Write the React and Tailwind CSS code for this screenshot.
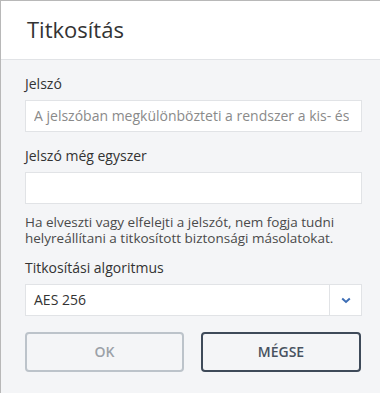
import React from "react";

export default function App() {
  return (
    <div
      className="w-[380px] h-[393px] overflow-hidden border-l border-t border-[#b8b8b8] bg-[#f4f5f7] flex flex-col"
      style={{ fontFamily: "'Open Sans', 'Liberation Sans', sans-serif" }}
    >
      <div className="h-[59px] shrink-0 bg-white border-b border-[#e1e3e6] flex items-center pl-[26px]">
        <h1 className="text-[22px] leading-none text-[#333] pb-[2px]">Titkosítás</h1>
      </div>
      <div className="pl-6 pt-[14px] w-[361px] flex flex-col">
        <label className="text-sm leading-5 text-[#333]">Jelszó</label>
        <div className="mt-1.5 h-8 bg-white border border-[#e1e3e6] flex items-center px-2">
          <span className="text-sm text-[#8a8a8a] whitespace-nowrap overflow-hidden">
            A jelszóban megkülönbözteti a rendszer a kis- és
          </span>
        </div>
        <label className="mt-[14px] text-sm leading-5 text-[#333]">Jelszó még egyszer</label>
        <div className="mt-1.5 h-8 bg-white border border-[#e1e3e6]"></div>
        <p className="mt-[10px] text-[13.5px] leading-4 text-[#4a4a4a]">
          Ha elveszti vagy elfelejti a jelszót, nem fogja tudni helyreállítani a titkosított biztonsági másolatokat.
        </p>
        <label className="mt-[12px] text-sm leading-5 text-[#333]">Titkosítási algoritmus</label>
        <div className="mt-1.5 h-8 bg-white border border-[#e1e3e6] flex items-stretch">
          <div className="flex-1 flex items-center px-2 text-sm text-[#333]">AES 256</div>
          <div className="w-8 border-l border-[#e1e3e6] flex items-center justify-center">
            <svg width="10" height="7" viewBox="0 0 10 7">
              <path d="M1.2 1.5 L5 5 L8.8 1.5" fill="none" stroke="#3d6eb5" strokeWidth="2" />
            </svg>
          </div>
        </div>
        <div className="mt-4 flex gap-[17px]">
          <button className="w-[159px] h-10 rounded border-2 border-[#bcc3ca] text-sm font-semibold text-[#9ba1a8]">
            OK
          </button>
          <button className="w-[160px] h-10 rounded border-2 border-[#3e4a59] text-sm font-semibold text-[#48525f]">
            MÉGSE
          </button>
        </div>
      </div>
    </div>
  );
}
